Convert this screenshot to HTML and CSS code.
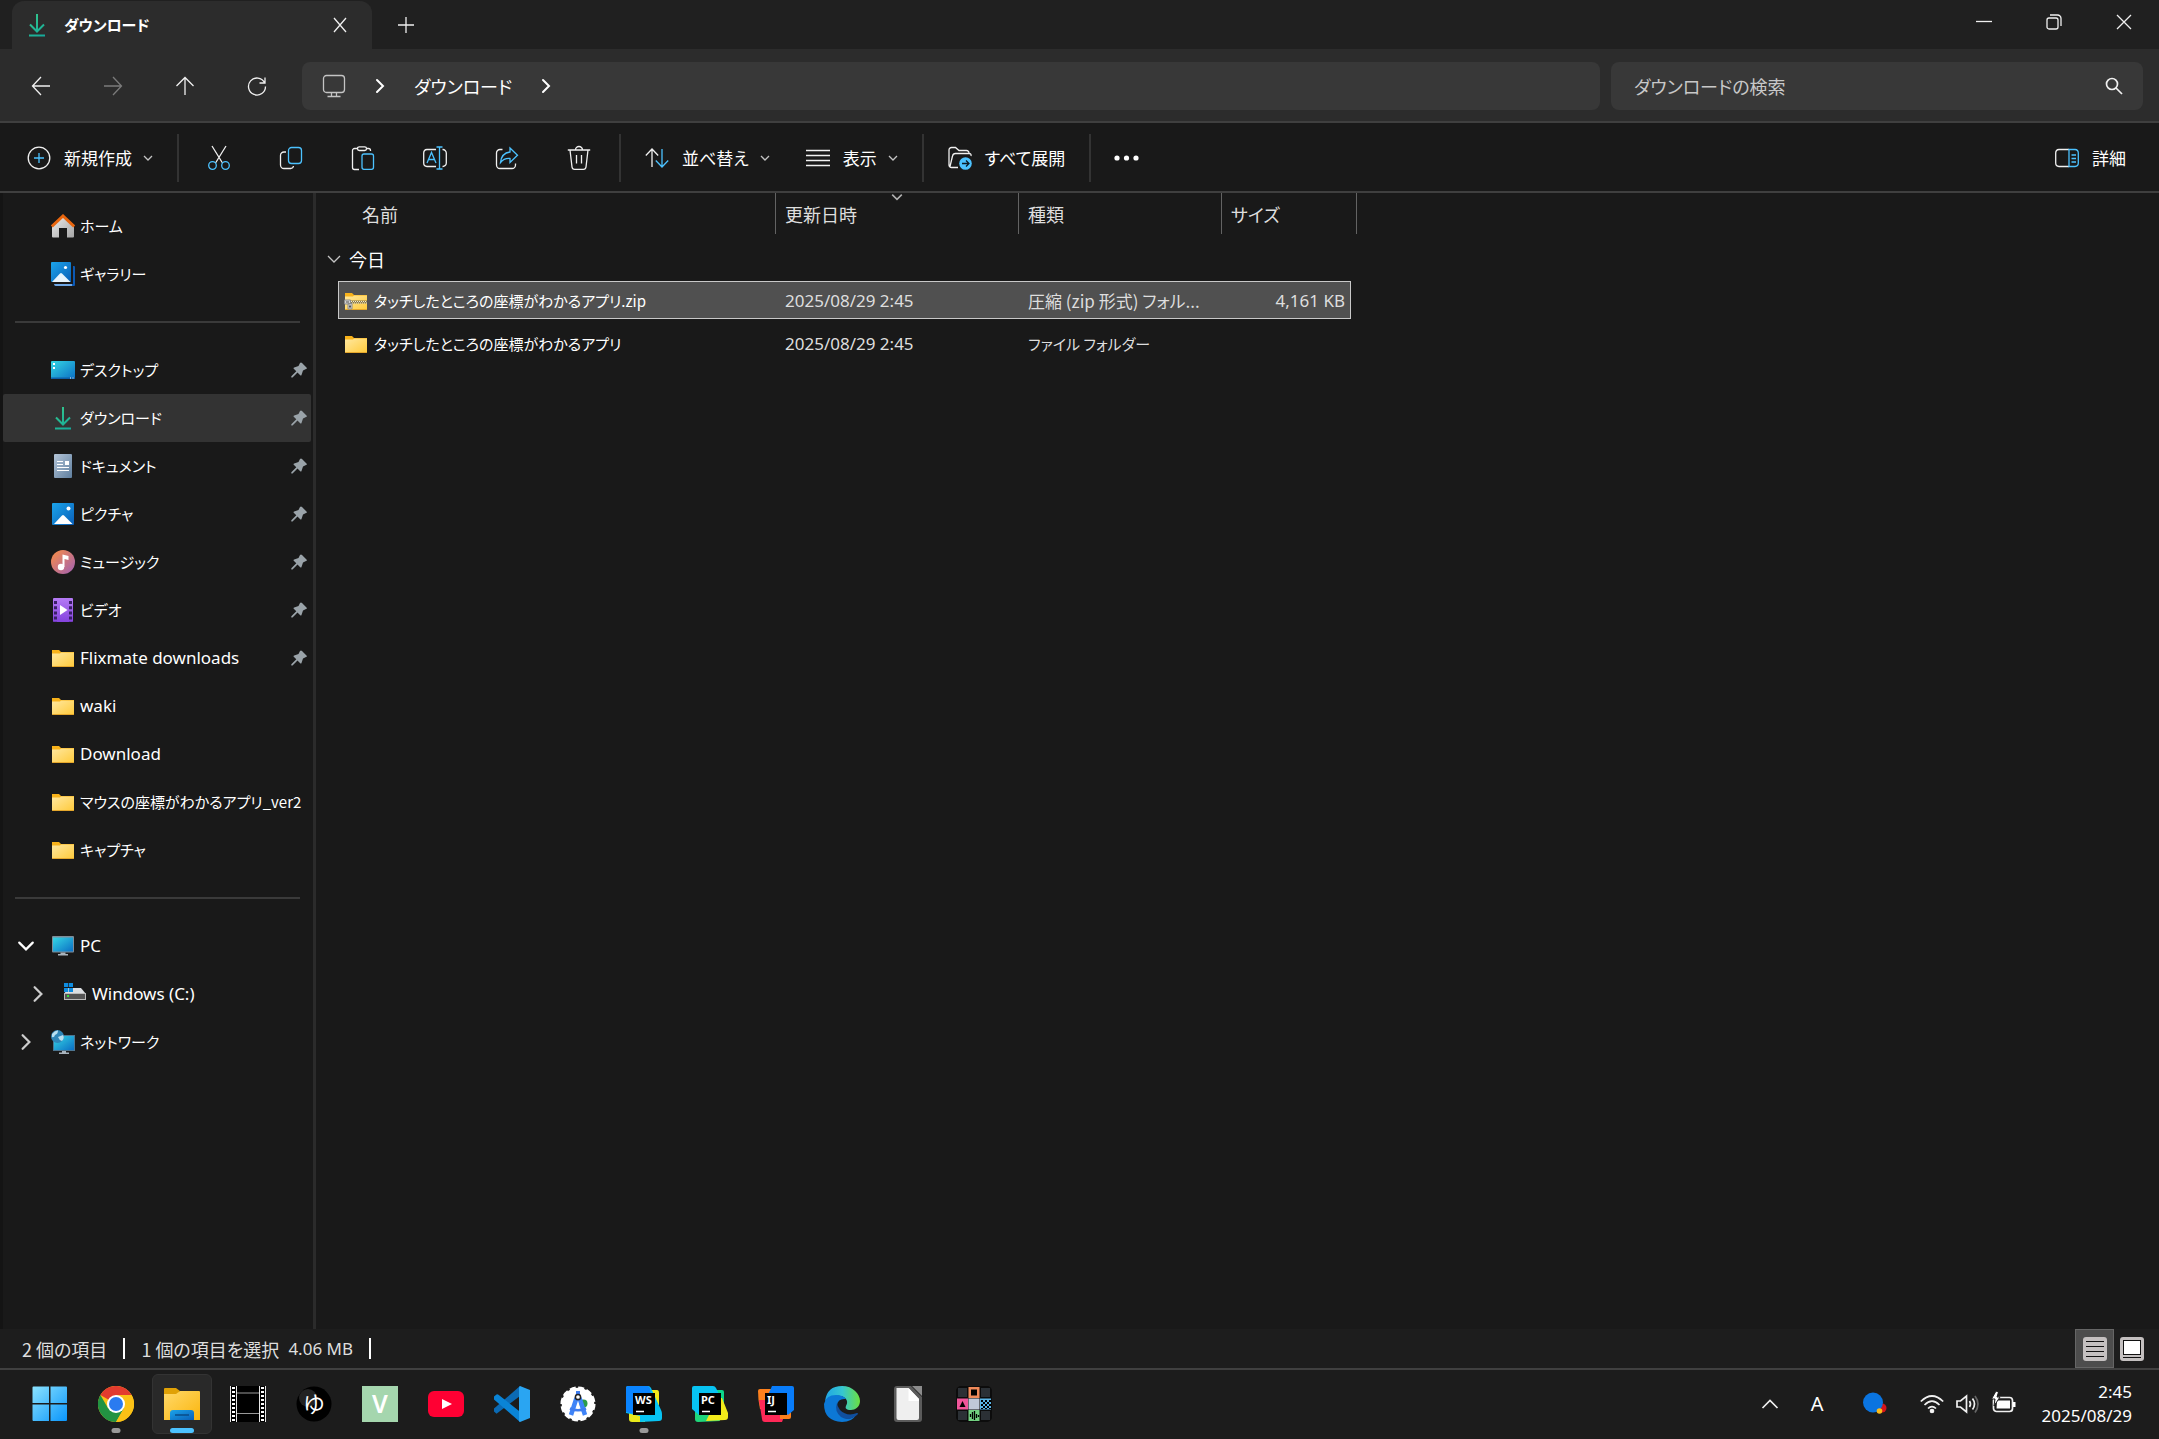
FILE: index.html
```html
<!DOCTYPE html>
<html lang="ja">
<head>
    <meta charset="UTF-8">
    <meta name="viewport" content="width=device-width, initial-scale=1.0">
    <title>ダウンロード</title>
    <link rel="stylesheet" href="styles.css">
</head>
<body>
    <!-- Shared gradients and symbols -->
    <svg class="defs" aria-hidden="true">
        <defs>
            <linearGradient id="gFolder" x1="0" y1="0" x2="1" y2="1"><stop offset="0" stop-color="#ffe8a0"/><stop offset="1" stop-color="#ffca3a"/></linearGradient>
            <linearGradient id="gBlue" x1="0" y1="0" x2="1" y2="1"><stop offset="0" stop-color="#1ba4ea"/><stop offset="1" stop-color="#0a5fb8"/></linearGradient>
            <linearGradient id="gScreen" x1="0" y1="0" x2="1" y2="1"><stop offset="0" stop-color="#35d6e4"/><stop offset="1" stop-color="#0b6fc4"/></linearGradient>
            <linearGradient id="gGreen" gradientUnits="userSpaceOnUse" x1="4" y1="0" x2="20" y2="24"><stop offset="0" stop-color="#36c98a"/><stop offset="1" stop-color="#14a89c"/></linearGradient>
            <linearGradient id="gWin" x1="0" y1="0" x2="1" y2="1"><stop offset="0" stop-color="#8be3ff"/><stop offset="1" stop-color="#0a95fb"/></linearGradient>
        </defs>
        <symbol id="folder" viewBox="0 0 24 24">
            <path d="M1 4h7l2 2h13v4H1z" fill="#f8b21a"/>
            <path d="M1 7.500h8l1-1h13V20a1 1 0 0 1-1 1H2a1 1 0 0 1-1-1z" fill="url(#gFolder)"/>
            <path d="M1 20h22a1 1 0 0 1-1 1H2a1 1 0 0 1-1-1z" fill="#e5a72c"/>
        </symbol>
        <symbol id="pin" viewBox="0 0 16 16">
            <path d="M9 1q1-1 2 0l4.500 4.500q1 1-.5 1.500l-3 1.500-1.500 4.500q-.5 1-1.500 0L6.500 10.500 1.500 15.500H.3v-1.200L5.300 9.300 3 7q-1-1 .2-1.500L7.500 4z" fill="#9aa3a9"/>
        </symbol>
        <symbol id="download" viewBox="0 0 24 24">
            <path d="M12 1v17M5 11.500l7 7 7-7M4 22.500h16" fill="none" stroke="url(#gGreen)" stroke-width="2"/>
        </symbol>
        <symbol id="chev-down" viewBox="0 0 16 16"><path d="M2 5l6 6 6-6" fill="none" stroke="currentColor" stroke-width="2" stroke-linecap="round"/></symbol>
        <symbol id="chev-right" viewBox="0 0 16 16"><path d="M5 2l6 6-6 6" fill="none" stroke="currentColor" stroke-width="2" stroke-linecap="round"/></symbol>
        <symbol id="chev-small" viewBox="0 0 10 10"><path d="M1 3l4 4 4-4" fill="none" stroke="currentColor" stroke-width="1.300"/></symbol>
    </svg>

    <header class="titlebar">
        <div class="tab">
            <svg class="icon24" viewBox="0 0 24 24"><use href="#download"/></svg>
            <span class="tab-title">ダウンロード</span>
            <button type="button" class="tab-close" aria-label="タブを閉じる">
                <svg width="16" height="16" viewBox="0 0 16 16" class="line"><path d="M2 1l12 14M14 1L2 15"/></svg>
            </button>
        </div>
        <button type="button" class="tab-add" aria-label="新しいタブ">
            <svg width="16" height="16" viewBox="0 0 16 16" class="line"><path d="M8 0v16M0 8h16"/></svg>
        </button>
        <div class="window-buttons">
            <button type="button" aria-label="最小化"><svg width="16" height="16" viewBox="0 0 16 16" class="line"><path d="M0 7.500h16"/></svg></button>
            <button type="button" aria-label="元に戻す"><svg width="16" height="16" viewBox="0 0 16 16" class="line"><rect x="1" y="4" width="11" height="11" rx="2"/><path d="M4 1h7.500a3.500 3.500 0 0 1 3.500 3.500V12"/></svg></button>
            <button type="button" aria-label="閉じる"><svg width="16" height="16" viewBox="0 0 16 16" class="line"><path d="M1 1l14 14M15 1L1 15"/></svg></button>
        </div>
    </header>

    <nav class="navbar">
        <div class="nav-buttons">
            <button type="button" aria-label="戻る"><svg width="20" height="20" viewBox="0 0 20 20" class="line"><path d="M19 10H1.500M10 1L1.500 10l8.500 9"/></svg></button>
            <button type="button" aria-label="進む" disabled><svg width="20" height="20" viewBox="0 0 20 20" class="line"><path d="M1 10h17.500M10 1l8.500 9-8.500 9"/></svg></button>
            <button type="button" aria-label="上へ"><svg width="20" height="20" viewBox="0 0 20 20" class="line"><path d="M10 19V1.500M1.500 10L10 1.500l8.500 8.500"/></svg></button>
            <button type="button" aria-label="更新"><svg width="20" height="20" viewBox="0 0 20 20" class="line"><path d="M17.500 6.500A8.500 8.500 0 1 0 18.500 10.500M18 1.500V7h-5.500"/></svg></button>
        </div>
        <div class="address">
            <svg width="24" height="24" viewBox="0 0 24 24" class="line soft"><rect x="1.500" y="1.500" width="21" height="17" rx="3"/><path d="M9.500 18.500V22M14.500 18.500V22M5.500 22.500h13"/></svg>
            <svg class="crumb-sep"><use href="#chev-right"/></svg>
            <a href="#">ダウンロード</a>
            <svg class="crumb-sep"><use href="#chev-right"/></svg>
        </div>
        <div class="search">
            <input type="text" placeholder="ダウンロードの検索" aria-label="ダウンロードの検索">
            <svg width="18" height="18" viewBox="0 0 18 18" class="line thick"><circle cx="7" cy="7" r="5.500"/><path d="M11 11l6 6"/></svg>
        </div>
    </nav>

    <div class="toolbar">
        <button type="button" class="tool">
            <svg class="icon24 line" viewBox="0 0 24 24"><circle cx="12" cy="12" r="10.800"/><path d="M12 7v10M7 12h10" class="accent"/></svg>
            新規作成
            <svg class="small-chev"><use href="#chev-small"/></svg>
        </button>
        <span class="divider"></span>
        <div class="tool-icons">
            <button type="button" aria-label="切り取り"><svg class="icon24 line" viewBox="0 0 24 24"><path d="M5 0l10.500 17M19 0L8.500 17"/><g class="accent"><circle cx="5.500" cy="19.500" r="3.800"/><circle cx="18.500" cy="19.500" r="3.800"/></g></svg></button>
            <button type="button" aria-label="コピー"><svg class="icon24 line" viewBox="0 0 24 24"><path d="M7 6H5a3.500 3.500 0 0 0-3.500 3.500V19a3.500 3.500 0 0 0 3.500 3.500h6.500a3 3 0 0 0 3-2.500"/><rect x="9.500" y="1.500" width="13" height="16" rx="3" class="accent"/></svg></button>
            <button type="button" aria-label="貼り付け"><svg class="icon24 line" viewBox="0 0 24 24"><path d="M7 2.500H3.500a2 2 0 0 0-2 2v17a2 2 0 0 0 2 2H8M15 2.500h2.500a2 2 0 0 1 2 2V5"/><rect x="6.500" y=".8" width="9" height="3.700" rx="1.800"/><rect x="11" y="8" width="11.500" height="15.300" rx="2" class="accent"/></svg></button>
            <button type="button" aria-label="名前の変更"><svg class="icon24 line" viewBox="0 0 24 24"><path d="M13 3.500H4A3.500 3.500 0 0 0 .7 7v10A3.500 3.500 0 0 0 4 20.500h9M19.500 3.500A3.500 3.500 0 0 1 23.300 7v10a3.500 3.500 0 0 1-3.800 3.500"/><path class="accent" d="M4 17L8.500 6.500 13 17M5.500 13.500h6M16.500 1v22M13.500 1h6M13.500 23h6"/></svg></button>
            <button type="button" aria-label="共有"><svg class="icon24 line" viewBox="0 0 24 24"><path d="M7.500 3.500H5A3.500 3.500 0 0 0 1.500 7v12A3.500 3.500 0 0 0 5 22.500h12a3.500 3.500 0 0 0 3.500-3.500v-1.500"/><path class="accent" d="M15 2l7.500 7.200L15 16.500V12.500q-6-.5-9.500 4Q6.500 7 15 6z"/></svg></button>
            <button type="button" aria-label="削除"><svg class="icon24 line" viewBox="0 0 24 24"><path d="M.8 4h22.400M8.500 4a3.500 3.500 0 0 1 7 0M3 4l2 17q.3 2.300 2.500 2.300h9Q18.700 23.300 19 21L21 4M9.500 9v8.500M14.500 9v8.500"/></svg></button>
        </div>
        <span class="divider"></span>
        <button type="button" class="tool">
            <svg class="icon24 line" viewBox="0 0 24 24"><path d="M7 21V3M.8 9.500L7 3l6.200 6.500"/><path class="accent" d="M17 3v18M10.800 14.500L17 21l6.200-6.500"/></svg>
            並べ替え
            <svg class="small-chev"><use href="#chev-small"/></svg>
        </button>
        <button type="button" class="tool">
            <svg class="icon24 line" viewBox="0 0 24 24"><path d="M0 4.500h24M0 9.500h24M0 14.500h24M0 19.500h24"/></svg>
            表示
            <svg class="small-chev"><use href="#chev-small"/></svg>
        </button>
        <span class="divider"></span>
        <button type="button" class="tool">
            <svg class="icon24 line" viewBox="0 0 24 24"><path d="M10 21.500H3.500A2.500 2.500 0 0 1 1 19V4a2.500 2.500 0 0 1 2.500-2.500h4L11 4.500h7.500A2.500 2.500 0 0 1 21 7M2 20.500L4.500 10q.5-2.500 3-2.500H21q2.500 0 2 2.500"/><circle cx="17.500" cy="17.500" r="6.300" fill="#4cc2ff" stroke="none"/><path d="M14 17.500h7M18 14.500l3 3-3 3" stroke="#0b1b26"/></svg>
            すべて展開
        </button>
        <span class="divider"></span>
        <button type="button" class="more" aria-label="もっと見る"><svg width="26" height="6" viewBox="0 0 26 6"><circle cx="3" cy="3" r="2.600" fill="#fff"/><circle cx="12.500" cy="3" r="2.600" fill="#fff"/><circle cx="22" cy="3" r="2.600" fill="#fff"/></svg></button>
        <button type="button" class="tool details">
            <svg class="icon24 line" viewBox="0 0 24 24"><path d="M14 3.500H4A3.500 3.500 0 0 0 .7 7v10A3.500 3.500 0 0 0 4 20.500h10"/><path class="accent" d="M14 3.500h6A3.500 3.500 0 0 1 23.300 7v10a3.500 3.500 0 0 1-3.300 3.500h-6zM16.500 9h4.500M16.500 12.500h4.500M16.500 16h4.500"/></svg>
            詳細
        </button>
    </div>

    <main class="explorer">
        <aside class="sidebar">
            <a href="#" class="side-item">
                <svg class="icon24" viewBox="0 0 24 24"><defs><linearGradient id="gHome" x1="0" y1="0" x2="1" y2="1"><stop offset="0" stop-color="#eee"/><stop offset="1" stop-color="#a5a5a5"/></linearGradient></defs><path d="M1 11L12 1.500 23 11v11.500a1 1 0 0 1-1 1h-6V14H8v9.500H2a1 1 0 0 1-1-1z" fill="url(#gHome)"/><path d="M.8 12.500L12 2l11.200 10.500" fill="none" stroke="#e8650d" stroke-width="3"/></svg>
                <span>ホーム</span>
            </a>
            <a href="#" class="side-item">
                <svg class="icon24" viewBox="0 0 24 24"><path d="M4 4h19a1 1 0 0 1 1 1v18a1 1 0 0 1-1 1H4z" fill="#0c59b4"/><path d="M3 22h18v2H5q-2 0-2-2z" fill="#6fa8e6"/><path d="M20 3h2v19H3v-2h17z" fill="#191919"/><rect width="20" height="20" rx="1" fill="url(#gBlue)"/><path d="M1 20l8-8.500q1-1 2 0L19.500 20z" fill="#e8f4fd"/><circle cx="14.500" cy="5.500" r="1.600" fill="#fff"/></svg>
                <span>ギャラリー</span>
            </a>
            <hr>
            <a href="#" class="side-item">
                <svg class="icon24" viewBox="0 0 24 24"><rect y="3" width="24" height="18" rx="1" fill="url(#gScreen)"/><path d="M2 5h2v2H2zM2 9h2v2H2z" fill="#fff"/><path d="M0 19.500h24V20a1 1 0 0 1-1 1H1a1 1 0 0 1-1-1z" fill="#0c5fa8"/><path d="M19 20h1M21.500 20h1" stroke="#fff"/></svg>
                <span>デスクトップ</span><svg class="pin"><use href="#pin"/></svg>
            </a>
            <a href="#" class="side-item selected">
                <svg class="icon24" viewBox="0 0 24 24"><use href="#download"/></svg>
                <span>ダウンロード</span><svg class="pin"><use href="#pin"/></svg>
            </a>
            <a href="#" class="side-item">
                <svg class="icon24" viewBox="0 0 24 24"><defs><linearGradient id="gDoc" x1="0" y1="0" x2="1" y2="1"><stop offset="0" stop-color="#b4c5d8"/><stop offset="1" stop-color="#5f7f9f"/></linearGradient></defs><rect x="3" width="18" height="24" rx="1" fill="url(#gDoc)"/><path d="M6 7.500h6M6 10.500h6M6 13.500h12M6 16.500h12" stroke="#fff"/><path d="M14 7h4v4h-4z" fill="#fff"/></svg>
                <span>ドキュメント</span><svg class="pin"><use href="#pin"/></svg>
            </a>
            <a href="#" class="side-item">
                <svg class="icon24" viewBox="0 0 24 24"><rect x="1" y="1" width="22" height="22" rx="1" fill="url(#gBlue)"/><path d="M3 22l8-8.500q1-1 2 0L21.500 22z" fill="#fff"/><circle cx="17.500" cy="6.500" r="2" fill="#fff"/></svg>
                <span>ピクチャ</span><svg class="pin"><use href="#pin"/></svg>
            </a>
            <a href="#" class="side-item">
                <svg class="icon24" viewBox="0 0 24 24"><defs><linearGradient id="gMusic" x1="0" y1="0" x2="1" y2="1"><stop offset="0.100" stop-color="#f28a4f"/><stop offset="1" stop-color="#9f5fb5"/></linearGradient></defs><circle cx="12" cy="12" r="12" fill="url(#gMusic)"/><circle cx="10" cy="17" r="3.200" fill="#fff"/><path d="M11.500 17V4.500l6 1.500v4l-4-1v8z" fill="#fff"/></svg>
                <span>ミュージック</span><svg class="pin"><use href="#pin"/></svg>
            </a>
            <a href="#" class="side-item">
                <svg class="icon24" viewBox="0 0 24 24"><defs><linearGradient id="gVideo" x1="0" y1="0" x2="0" y2="1"><stop offset="0" stop-color="#b57bf5"/><stop offset="1" stop-color="#8443dd"/></linearGradient></defs><rect x="2" width="20" height="24" rx="1" fill="url(#gVideo)"/><path d="M4.500 3v21M19.500 3v21" stroke="#3a1f66" stroke-width="3" stroke-dasharray="3 2.200"/><path d="M9 7l7.500 5L9 17z" fill="#fff"/></svg>
                <span>ビデオ</span><svg class="pin"><use href="#pin"/></svg>
            </a>
            <a href="#" class="side-item latin"><svg class="icon24"><use href="#folder"/></svg><span>Flixmate downloads</span><svg class="pin"><use href="#pin"/></svg></a>
            <a href="#" class="side-item latin"><svg class="icon24"><use href="#folder"/></svg><span>waki</span></a>
            <a href="#" class="side-item latin"><svg class="icon24"><use href="#folder"/></svg><span>Download</span></a>
            <a href="#" class="side-item"><svg class="icon24"><use href="#folder"/></svg><span>マウスの座標がわかるアプリ_ver2</span></a>
            <a href="#" class="side-item"><svg class="icon24"><use href="#folder"/></svg><span>キャプチャ</span></a>
            <hr>
            <a href="#" class="side-item latin tree">
                <svg class="twisty open"><use href="#chev-down"/></svg>
                <svg class="icon24" viewBox="0 0 24 24"><rect x="1" y="2" width="22" height="16.500" rx="1" fill="#7f8d99"/><rect x="2" y="3.500" width="20" height="14" fill="url(#gScreen)"/><path d="M9.500 18.500h5V20H17v1.500H7V20h2.500z" fill="#a9b4bd"/></svg>
                <span>PC</span>
            </a>
            <a href="#" class="side-item latin tree child">
                <svg class="twisty"><use href="#chev-right"/></svg>
                <svg class="icon24" viewBox="0 0 24 24"><path d="M5 6h13l5 6H1z" fill="#dcdfe2"/><rect x="1.500" y="11.500" width="21" height="6" fill="#555" stroke="#bbb"/><path d="M4 13h2v2H4z" fill="#35e03a"/><path d="M1 1h4.300v4H1zM6 1h4v4H6zM1 6h4.300v4H1zM6 6h4v4H6z" fill="#0e8ce0"/></svg>
                <span>Windows (C:)</span>
            </a>
            <a href="#" class="side-item tree">
                <svg class="twisty"><use href="#chev-right"/></svg>
                <svg class="icon24" viewBox="0 0 24 24"><rect x="2" y="5" width="22" height="16" fill="#4d7590"/><rect x="3" y="6" width="20" height="14" fill="url(#gScreen)"/><path d="M11 21h4v1.500h3V24H8v-1.500h3z" fill="#a9b4bd"/><circle cx="6.500" cy="6.500" r="6.500" fill="#2f86b8"/><path d="M1 4q3-4 6-3.500Q7 4 4 5 3 8 1 7zM7 7l5-2q2 3-1 6-3-1-4-4z" fill="#b9dff0"/></svg>
                <span>ネットワーク</span>
            </a>
        </aside>

        <section class="files">
            <table class="file-table">
                <colgroup><col class="c-name"><col class="c-date"><col class="c-type"><col class="c-size"><col class="c-end"></colgroup>
                <thead>
                    <tr>
                        <th class="h-name">名前</th>
                        <th>更新日時<svg class="sort-mark"><use href="#chev-small"/></svg></th>
                        <th>種類</th>
                        <th colspan="2">サイズ</th>
                    </tr>
                </thead>
                <tbody>
                    <tr class="group">
                        <td colspan="5"><div class="group-head"><svg width="14" height="14" viewBox="0 0 14 14" class="line soft"><path d="M1 4l6 6 6-6"/></svg>今日</div></td>
                    </tr>
                    <tr class="file active">
                        <td>
                            <div class="file-name">
                                <svg class="icon24" viewBox="0 0 24 24"><use href="#folder"/><path d="M6 13h17" stroke="#8a7a4a" stroke-width="3"/><path d="M7 12.500h16M8 14h15" stroke="#f3ead0" stroke-dasharray="1 1"/><path d="M.5 11h6v4h-6zM4 14.500h4V20H4z" fill="#d2d2d2" stroke="#8c8c8c"/><path d="M5 16.500h2v2H5zM2 12.500h3v1H2z" fill="#555"/></svg>
                                タッチしたところの座標がわかるアプリ.zip
                            </div>
                        </td>
                        <td class="latin">2025/08/29 2:45</td>
                        <td>圧縮 (zip 形式) フォル...</td>
                        <td class="latin size">4,161 KB</td>
                    </tr>
                    <tr class="file">
                        <td>
                            <div class="file-name">
                                <svg class="icon24"><use href="#folder"/></svg>
                                タッチしたところの座標がわかるアプリ
                            </div>
                        </td>
                        <td class="latin">2025/08/29 2:45</td>
                        <td class="kana">ファイル フォルダー</td>
                        <td></td>
                    </tr>
                </tbody>
            </table>
        </section>
    </main>

    <div class="statusbar">
        <span>2 個の項目</span>
        <span class="status-sep"></span>
        <span>1 個の項目を選択</span>
        <span class="latin status-size">4.06 MB</span>
        <span class="status-sep"></span>
        <div class="view-buttons">
            <button type="button" class="on" aria-label="詳細表示"><svg class="icon24" viewBox="0 0 24 24"><rect width="24" height="24" rx="3" fill="#c4c0c0"/><path d="M3 4.500h18M3 9.500h18M3 14.500h18M3 19.500h18" stroke="#111"/></svg></button>
            <button type="button" aria-label="大きい縮小表示"><svg class="icon24" viewBox="0 0 24 24"><rect width="24" height="24" rx="3" fill="#c4c0c0"/><rect x="3.500" y="3.500" width="17" height="14" fill="#fff" stroke="#111"/><path d="M3 20.500h18" stroke="#111"/></svg></button>
        </div>
    </div>

    <footer class="taskbar">
        <div class="apps">
            <button type="button" aria-label="スタート"><svg viewBox="0 0 36 36"><path d="M.5 1.500a1 1 0 0 1 1-1H17V17H.5zM18.500.5H34a1 1 0 0 1 1 1V17H18.500zM.5 18.500H17V35H1.500a1 1 0 0 1-1-1zM18.500 18.500H35V34a1 1 0 0 1-1 1H18.500z" fill="url(#gWin)"/></svg></button>
            <button type="button" class="running" aria-label="Chrome"><svg viewBox="0 0 36 36"><circle cx="18" cy="18" r="18" fill="#fbc116"/><path d="M18 18L2.400 9A18 18 0 0 1 33.600 9z" fill="#e33b2e"/><path d="M18 9h15.600L18 18z" fill="#e33b2e"/><path d="M2.400 9A18 18 0 0 0 18 36l7.800-13.500L18 18l-7.800 4.500z" fill="#229342"/><path d="M18 9H33.600A18 18 0 0 1 18 36l7.800-13.500z" fill="#fbc116"/><circle cx="18" cy="18" r="9" fill="#fff"/><circle cx="18" cy="18" r="7" fill="#2a7bf0"/></svg></button>
            <button type="button" class="current" aria-label="エクスプローラー"><svg viewBox="0 0 36 36"><defs><linearGradient id="gExp" x1="0" y1="0" x2="1" y2="1"><stop offset="0" stop-color="#ffd96a"/><stop offset="1" stop-color="#fbb50c"/></linearGradient></defs><path d="M0 3a1 1 0 0 1 1-1h11l4 3-3 4H0z" fill="#e0a106"/><path d="M0 8h12l4-3h19a1 1 0 0 1 1 1v28H0z" fill="url(#gExp)"/><path d="M6 34V27a3 3 0 0 1 3-3h18a3 3 0 0 1 3 3v7z" fill="url(#gBlue)"/><path d="M11 29h14" stroke="#0a4b87" stroke-width="1.500"/></svg></button>
            <button type="button" aria-label="動画編集"><svg viewBox="0 0 36 36"><path d="M0 0h36v36H0z"/><path d="M0 0h7v36H0zM29 0h7v36h-7z" fill="#e8e8e8"/><path d="M3.500 0v36M32.500 0v36" stroke="#000" stroke-width="5"/><path d="M3.500 1v35M32.500 1v35" stroke="#fff" stroke-width="3" stroke-dasharray="2 2"/><path d="M7 7h22M7 27.500h22" stroke="#999"/></svg></button>
            <button type="button" aria-label="ゆ"><svg viewBox="0 0 36 36"><circle cx="18" cy="18" r="17.500" fill="#000"/><circle cx="12" cy="12" r="9" fill="#222"/><text x="18" y="26" class="glyph-yu">ゆ</text></svg></button>
            <button type="button" aria-label="V"><svg viewBox="0 0 36 36"><path d="M0 0h36v36H0z" fill="#a5d6ae"/><text x="18" y="27" class="glyph-v">V</text></svg></button>
            <button type="button" aria-label="YouTube"><svg viewBox="0 0 36 36"><rect y="5" width="36" height="26" rx="6" fill="#ff0033"/><path d="M14 13l10 5-10 5z" fill="#fff"/></svg></button>
            <button type="button" aria-label="Visual Studio Code"><svg viewBox="0 0 36 36"><path d="M26 0L0 22.500v3l2.500 2.300L26 10z" fill="#0b6ab4"/><path d="M0 10.500L2.500 8.500q1-.6 2 .2L27 26.500 26 36 0 13.500z" fill="#0a84d6"/><path d="M26 0l10 4v28l-10 4q-1-.5-1-1.500v-33Q25 .5 26 0z" fill="#2aa5f2"/></svg></button>
            <button type="button" aria-label="Android Studio"><svg viewBox="0 0 36 36"><circle cx="18" cy="18" r="16.300" fill="#fff" stroke="#fff" stroke-width="2.500" stroke-dasharray="6 2.500"/><circle cx="23.500" cy="17.500" r="4" fill="#2d9c4a"/><path d="M16 5h4v5h-4z" fill="#3f7df0"/><path d="M16.500 12L11 29M19.500 12L25 29" stroke="#3f84f8" stroke-width="4.500"/><path d="M10 22.500q8 3.500 16 0" fill="none" stroke="#3f7df0" stroke-width="2.500"/><circle cx="18" cy="11" r="2.600" fill="#fff" stroke="#222" stroke-width="1.500"/></svg></button>
            <button type="button" class="running" aria-label="WebStorm"><svg viewBox="0 0 36 36"><path d="M20 4h11q2 0 2 3v12H18z" fill="#f2ea1a"/><path d="M3 25h16v11H6q-3 0-3-3z" fill="#e9ea1a"/><path d="M2 0h20q2 0 3 2l10 22q1 2 1 4v4q0 3-3 3l-19 1V30L0 27V2q0-2 2-2z" fill="#07c3f2"/><path d="M2 0h20l2 2 1 6H8v20L0 26V2q0-2 2-2z" fill="#0a84ff"/><path d="M7 7h22v22H7z"/><path d="M10 25.500h8" stroke="#fff" stroke-width="1.500"/><text x="9" y="18" class="glyph-jb">WS</text></svg></button>
            <button type="button" aria-label="PyCharm"><svg viewBox="0 0 36 36"><path d="M20 4h10q2 0 2 2v12H18z" fill="#0bd68b"/><path d="M3 22h20l5 13-22 1q-3 0-3-3z" fill="#1fd77b"/><path d="M2 0h19q2 0 3 2l4 8v8L7 29l-7-6V2q0-2 2-2z" fill="#07c3f2"/><path d="M26 12h4l6 15v4q0 3-3 3l-19 1 4-8z" fill="#f2ea1a"/><path d="M7 7h22v22H7z"/><path d="M10 25.500h8" stroke="#fff" stroke-width="1.500"/><text x="9" y="18" class="glyph-jb">PC</text></svg></button>
            <button type="button" aria-label="IntelliJ IDEA"><svg viewBox="0 0 36 36"><path d="M2 3h12v20H2Q0 14 0 5q0-2 2-2z" fill="#fc801d"/><path d="M1 14h14l12 14-3 8H7q-3 0-3-3z" fill="#fe2857"/><path d="M22 24h11v7q0 2-2 2h-9z" fill="#fc801d"/><path d="M14 0h20q2 0 2 2v22l-6 5L10 9z" fill="#087cfa"/><path d="M7 7h22v22H7z"/><path d="M10 25.500h8" stroke="#fff" stroke-width="1.500"/><text x="9" y="18" class="glyph-jb">IJ</text></svg></button>
            <button type="button" aria-label="Edge"><svg viewBox="0 0 36 36"><defs><linearGradient id="gEdge" x1="0" y1="0" x2="1" y2="0"><stop offset="0" stop-color="#1fa5e6"/><stop offset="0.500" stop-color="#36c6d0"/><stop offset="1" stop-color="#6be03f"/></linearGradient></defs><path d="M1 15Q3 0 18 0c11 0 18 8 18 15 0 6-5 9-9 9-5 0-6-2-5-4 4-6-3-11-9-10Q5 11 1 15z" fill="url(#gEdge)"/><path d="M0 18Q2 9 12 9q7 0 10 4-8-1-9 6 0 8 6 12 7 4 13-2-4 7-14 7Q0 35 0 18z" fill="#0c78d6"/><path d="M13 17q-3 8 4 14 8 5 16-2 2-2 0-2-10 4-17-3-3-4-3-7z" fill="#104f9e"/></svg></button>
            <button type="button" aria-label="LibreOffice"><svg viewBox="0 0 36 36"><path d="M7 0h14l11 11v22q0 3-3 3H7q-3 0-3-3V3q0-3 3-3z" fill="#5b5b5b"/><path d="M6.500 2h12L29 13v19q0 2-2 2H8.500q-2 0-2-2z" fill="#efefef"/><path d="M18.500 2L29 13v2H18.500z" fill="#fff"/><path d="M22 0h10v10z" fill="#8c8c8c"/></svg></button>
            <button type="button" aria-label="ゲーム"><svg viewBox="0 0 36 36"><rect width="36" height="36" rx="5" fill="#0c0c0c"/><path d="M2 2h9v9H2zM25 2h9v9h-9zM2 25h9v9H2zM25 25h9v9h-9z" fill="#2b3035"/><path d="M12.500 1h11v11h-11z" fill="#f08a5a"/><path d="M15 3.500h6v6h-6z"/><path d="M1 12.500h11v11H1z" fill="#f0559a"/><path d="M6.500 15l3 6h-6z"/><path d="M12.500 12.500h11v11h-11z" fill="#c0c8d8"/><path d="M24 12.500h11v11H24z" fill="#5ab5e6"/><path d="M26 14v9M30 14v9M34 14v9" stroke="#000" stroke-width="2" stroke-dasharray="2 2"/><path d="M28 16v6M32 16v6" stroke="#000" stroke-width="2" stroke-dasharray="2 2"/><path d="M12.500 24h11v11h-11z" fill="#72d080"/><path d="M14.500 28v3M16.500 26v7M18.500 25v9M20.500 28v4M22.500 29v2" stroke="#000" stroke-width="1.300"/></svg></button>
        </div>
        <div class="tray">
            <button type="button" aria-label="隠れているインジケーター"><svg width="18" height="18" viewBox="0 0 18 18" class="line thick"><path d="M1.500 13L9 5.500l7.500 7.500"/></svg></button>
            <span class="ime">A</span>
            <svg class="ball" width="24" height="24" viewBox="0 0 24 24"><circle cx="19" cy="16" r="4.500" fill="#d4141a"/><circle cx="10" cy="10.500" r="10" fill="#0a74e0"/><circle cx="16.500" cy="19" r="2.800" fill="#fbbc1a"/></svg>
            <div class="quick">
                <svg class="icon24 line thick" viewBox="0 0 24 24"><path d="M.8 9.500q11.200-11 22.400 0M4.500 13q7.500-7.500 15 0M8 16.500q4-4 8 0"/><circle cx="12" cy="19" r="1.500" fill="#fff"/></svg>
                <svg class="icon24 line thick" viewBox="0 0 24 24"><path d="M1 9v6h3.500L10.500 20V4L4.500 9zM13.500 9q2 3 0 6M16.500 6.500q4 5.500 0 11"/><path d="M19 4q6 8 0 16.500" stroke="#666"/></svg>
                <svg class="icon24 line thick" viewBox="0 0 24 24"><rect x="1.500" y="5.500" width="19" height="14" rx="3"/><path d="M5 8.500h13v8H4.500z" fill="#fff" stroke="none"/><path d="M21 10h2.500v5H21z" fill="#fff" stroke="none"/><path d="M4-1L-.5 7H3l-1 7L8 5H5L6.500 0z" fill="#fff" stroke="#1c1c1c" stroke-width="1"/></svg>
            </div>
            <div class="clock latin"><span>2:45</span><span>2025/08/29</span></div>
        </div>
    </footer>
</body>
</html>
```
FILE: styles.css
```css
* {
    box-sizing: border-box;
}
body {
    margin: 0;
    min-height: 100vh;
    display: flex;
    flex-direction: column;
    background: #191919;
    color: #fff;
    font-family: "Noto Sans CJK JP", "Noto Sans", sans-serif;
    font-feature-settings: "palt";
    font-size: 17px;
    line-height: 24px;
}
button {
    display: flex;
    align-items: center;
    justify-content: center;
    padding: 0;
    background: none;
    border: none;
    color: inherit;
    font: inherit;
    font-feature-settings: inherit;
    cursor: pointer;
}
a {
    color: inherit;
    text-decoration: none;
}
svg {
    display: block;
    flex: none;
}
.defs {
    position: absolute;
    width: 0;
    height: 0;
}
.icon24 {
    width: 24px;
    height: 24px;
}
.latin {
    font-family: "Noto Sans", "Noto Sans CJK JP", sans-serif;
}
.line {
    fill: none;
    stroke: #f0f0f0;
    stroke-width: 1.3;
    overflow: visible;
}
.line.soft {
    stroke: #c4c4c4;
}
.line.thick {
    stroke-width: 1.7;
}
.accent {
    stroke: #4cc2ff;
}

/* Title bar */
.titlebar {
    display: flex;
    height: 49px;
    padding-left: 12px;
    background: #202020;
}
.tab {
    display: flex;
    align-items: center;
    width: 360px;
    margin-top: 1px;
    padding: 0 18px 0 13px;
    background: #2c2c2c;
    border-radius: 12px 12px 0 0;
}
.tab-title {
    flex: 1;
    margin-left: 15px;
    font-size: 15px;
    font-weight: 700;
}
.tab-close {
    width: 28px;
    height: 28px;
}
.tab-add {
    width: 68px;
}
.window-buttons {
    display: flex;
    margin-left: auto;
}
.window-buttons button {
    width: 70px;
    height: 43px;
}

/* Navigation bar */
.navbar {
    display: flex;
    align-items: center;
    height: 74px;
    padding: 2px 16px 0 5px;
    background: #2c2c2c;
    border-bottom: 2px solid #3f3f3f;
    font-size: 18px;
}
.nav-buttons {
    display: flex;
    margin-right: 9px;
}
.nav-buttons button {
    width: 72px;
    height: 48px;
}
.nav-buttons button:disabled {
    opacity: 0.4;
}
.address {
    display: flex;
    flex: 1;
    align-items: center;
    height: 48px;
    padding-left: 20px;
    background: #383838;
    border-radius: 8px;
}
.crumb-sep {
    width: 16px;
    height: 16px;
    margin: 0 26px;
}
.search {
    display: flex;
    align-items: center;
    width: 532px;
    height: 48px;
    margin-left: 11px;
    padding: 0 20px 0 23px;
    background: #383838;
    border-radius: 8px;
}
.search input {
    flex: 1;
    padding: 0;
    background: none;
    border: none;
    outline: none;
    color: #fff;
    font: inherit;
    font-feature-settings: inherit;
}
.search input::placeholder {
    color: #c8c8c8;
    opacity: 1;
}

/* Command bar */
.toolbar {
    display: flex;
    align-items: center;
    height: 70px;
    padding: 2px 9px 0 3px;
    border-bottom: 2px solid #3f3f3f;
}
.tool {
    gap: 13px;
    height: 48px;
    padding: 0 24px;
}
.tool + .tool {
    padding-left: 12px;
}
.small-chev {
    width: 10px;
    height: 10px;
    margin-left: -2px;
    color: #c4c4c4;
}
.divider {
    width: 2px;
    height: 48px;
    background: #333;
}
.tool-icons {
    display: flex;
    padding: 0 4px;
}
.tool-icons button {
    width: 72px;
    height: 48px;
}
.more {
    width: 72px;
    height: 48px;
}
.details {
    margin-left: auto;
}

/* Main area */
.explorer {
    display: flex;
    flex: 1;
}
.sidebar {
    width: 316px;
    padding-top: 9px;
    border-left: 3px solid #141414;
    border-right: 3px solid #2b2b2b;
    font-size: 15px;
}
.side-item {
    display: flex;
    align-items: center;
    gap: 5px;
    height: 48px;
    margin-right: 2px;
    padding: 0 4px 0 48px;
    white-space: nowrap;
}
.side-item.latin {
    font-size: 17px;
}
.side-item.selected {
    background: #333;
    border-radius: 2px;
}
.side-item.tree {
    padding-left: 14px;
}
.side-item.child {
    padding-left: 26px;
}
.twisty {
    width: 18px;
    height: 18px;
    margin-right: 11px;
    color: #ccc;
}
.twisty.open {
    color: #fff;
}
.pin {
    width: 16px;
    height: 16px;
    margin-left: auto;
}
.sidebar hr {
    height: 2px;
    margin: 23px 13px 23px 12px;
    background: #3a3a3a;
    border: none;
}
.files {
    flex: 1;
    padding-left: 22px;
}

/* File list */
.file-table {
    width: 1019px;
    margin-top: -5px;
    table-layout: fixed;
    border-spacing: 0 5px;
}
.c-name {
    width: 438px;
}
.c-date {
    width: 243px;
}
.c-type {
    width: 203px;
}
.c-size {
    width: 129px;
}
.c-end {
    width: 6px;
}
.file-table th {
    position: relative;
    height: 41px;
    padding: 0 9px;
    border-right: 1px solid #636363;
    color: #dedede;
    font-size: 18px;
    font-weight: 400;
    text-align: left;
}
.file-table .h-name {
    padding-left: 24px;
}
.sort-mark {
    position: absolute;
    top: -2px;
    left: 50%;
    width: 12px;
    height: 12px;
    margin-left: -6px;
    color: #b0b0b0;
}
.group td {
    height: 37px;
    padding: 3px 0 0;
    font-size: 18px;
}
.group-head {
    display: flex;
    align-items: center;
    gap: 8px;
    margin-left: -11px;
}
.file td {
    height: 38px;
    padding: 1px 9px 0;
    border: 1px solid transparent;
    border-width: 1px 0;
    color: #dedede;
    white-space: nowrap;
}
.file td:first-child {
    padding-left: 5px;
    border-left-width: 1px;
    color: #fff;
}
.file td:last-child {
    padding-right: 5px;
    border-right-width: 1px;
}
.file.active td {
    background: #505050;
    border-color: #c8c8c8;
}
.file-name {
    display: flex;
    align-items: center;
    gap: 6px;
    font-size: 15px;
}
.file .kana {
    font-size: 15px;
}
.file td.size {
    text-align: right;
}

/* Status bar */
.statusbar {
    display: flex;
    align-items: center;
    height: 41px;
    padding: 0 9px 0 22px;
    background: #1d1d1d;
    border-bottom: 2px solid #404040;
    color: #dedede;
    font-size: 18px;
}
.status-sep {
    width: 2px;
    height: 21px;
    margin: 0 16px;
    background: #fff;
}
.status-size {
    margin-left: 9px;
    font-size: 17px;
}
.view-buttons {
    display: flex;
    margin-left: auto;
}
.view-buttons button {
    width: 36px;
    height: 39px;
}
.view-buttons .on {
    width: 39px;
    background: #4d4d4d;
    border: 1px solid #666;
}

/* Taskbar */
.taskbar {
    display: flex;
    align-items: center;
    justify-content: space-between;
    height: 69px;
    padding: 0 27px 2px 20px;
    background: #1c1c1c;
}
.apps {
    display: flex;
    gap: 6px;
}
.apps button {
    position: relative;
    width: 60px;
    height: 60px;
    border: 1px solid transparent;
    border-radius: 6px;
}
.apps svg {
    width: 36px;
    height: 36px;
}
.apps .current {
    background: #292929;
    border-color: #333;
}
.apps .current::after,
.apps .running::after {
    content: "";
    position: absolute;
    bottom: 0;
    left: 50%;
    width: 9px;
    height: 5px;
    background: #999;
    border-radius: 3px;
    transform: translateX(-50%);
}
.apps .current::after {
    width: 24px;
    background: #4cc2ff;
}
.glyph-yu {
    fill: #fff;
    font-size: 22px;
    font-weight: 400;
    text-anchor: middle;
}
.glyph-v {
    fill: #fff;
    font-family: "Noto Sans", sans-serif;
    font-size: 25px;
    font-weight: 600;
    text-anchor: middle;
}
.glyph-jb {
    fill: #fff;
    font-family: "Noto Sans", sans-serif;
    font-size: 11px;
    font-weight: 700;
}
.tray {
    display: flex;
    align-items: center;
}
.ime {
    margin: 0 39px 0 32px;
    font-family: "Noto Sans", sans-serif;
    font-size: 20px;
}
.quick {
    display: flex;
    gap: 12px;
    margin: 0 26px 0 33px;
}
.clock {
    display: flex;
    flex-direction: column;
    text-align: right;
}
```
